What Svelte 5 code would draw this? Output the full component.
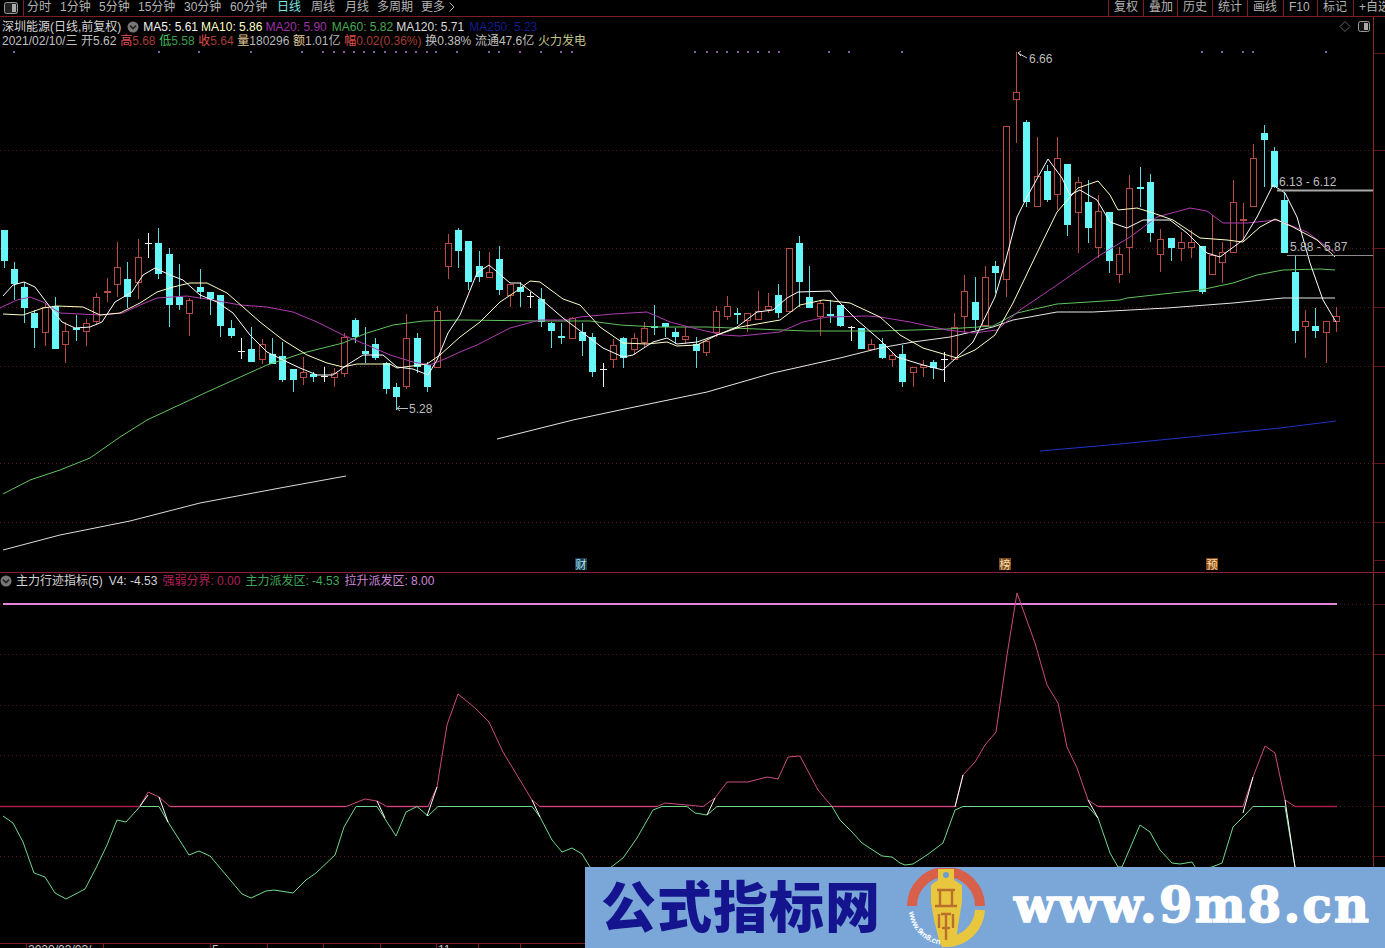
<script>
  // kind, high, body top, body bottom, low: all in page pixels
  const rows = `c 230 230 261 268;c 262 269 284 300;c 282 287 308 323;c 310 313 328 348;r 303 307 332 346;c 297 306 349 349;r 322 331 344 363;c 315 328 330 341;r 319 323 331 346;r 293 297 321 325;r 278 291 292 302;r 242 267 284 297;c 262 279 297 308;r 239 257 282 299;w 233 243 243 258;c 228 243 274 279;c 248 254 305 327;c 264 297 305 310;r 298 300 313 336;c 269 287 292 299;c 292 292 299 315;c 295 295 326 337;c 320 328 336 338;w 338 351 351 359;c 327 349 362 362;r 339 344 359 364;c 338 354 364 364;c 342 356 380 382;c 369 369 380 392;r 357 372 377 385;c 372 374 377 382;w 367 376 376 382;r 368 373 377 387;r 333 337 373 377;c 318 320 337 343;c 327 351 354 363;c 338 344 358 360;c 362 363 389 394;c 383 387 397 410;r 314 338 386 389;c 333 338 367 373;c 362 365 387 392;r 306 311 367 367;r 234 243 266 279;c 228 230 251 268;c 241 241 282 290;c 251 266 277 282;r 252 272 277 277;c 246 259 290 295;r 284 284 295 307;c 282 287 292 307;w 292 296 296 308;c 288 299 322 327;c 322 323 331 348;c 323 336 338 344;r 317 318 338 339;c 323 332 341 356;c 333 337 372 377;w 363 369 369 387;r 339 345 359 368;c 337 338 358 368;r 333 338 349 355;r 322 328 342 347;c 305 326 328 335;c 323 323 327 337;c 328 332 337 344;r 327 336 339 344;c 337 344 351 368;r 341 341 352 356;r 306 311 332 337;r 296 306 316 320;c 308 313 315 324;r 313 313 320 332;r 291 311 319 319;r 293 306 309 313;c 284 295 313 318;r 248 248 311 311;c 236 243 282 307;c 266 297 308 308;r 300 303 316 336;c 300 314 316 323;c 305 305 326 327;w 326 327 327 341;c 328 328 349 349;r 339 344 349 349;c 338 344 358 359;r 352 355 359 367;c 345 354 382 387;r 367 367 372 387;r 360 365 367 377;c 360 362 368 379;w 352 359 359 382;r 313 327 359 359;r 275 291 316 333;c 277 302 320 330;r 266 277 325 327;c 261 266 273 293;r 126 126 279 297;r 52 92 99 143;c 120 122 202 207;r 137 176 206 206;c 165 171 200 202;r 137 158 194 210;c 164 164 225 236;r 177 182 212 253;c 180 202 228 243;r 195 211 247 258;c 212 212 261 273;r 247 254 274 283;r 175 188 247 273;c 167 187 188 207;c 174 182 233 242;r 229 239 254 272;c 238 238 248 261;r 232 242 248 261;r 230 242 247 258;c 246 246 292 294;r 215 255 274 274;r 242 252 262 283;r 180 202 252 252;r 203 219 220 242;r 144 158 206 206;c 125 133 140 187;c 147 151 187 188;c 192 200 253 253;c 256 272 331 343;r 310 321 326 358;c 308 326 331 338;r 321 321 332 363;r 307 316 321 332`;

  const candles = rows.split(';').map((row, i) => {
    const [kind, ...ys] = row.split(' ');
    const [high, top, bot, low] = ys.map(Number);
    return { kind, high, top, bot, low, x: Math.round(3.5 + 10.33 * i) + 0.5 };
  });

  const ma5 = '3,296 13,285 24,282 35,287 50,307 62,322 75,328 90,327 102,322 115,302 132,292 143,275 155,268 170,275 183,280 200,295 217,302 233,313 250,335 267,352 283,360 300,368 317,375 333,375 347,365 363,355 383,355 397,367 413,369 428,375 437,360 448,333 460,315 477,273 489,265 510,283 520,283 542,300 563,318 583,333 603,348 623,357 633,355 653,342 667,338 677,344 697,342 717,335 737,327 757,312 773,310 787,298 798,292 830,291 840,303 857,320 880,340 897,357 923,365 943,370 957,357 973,342 995,297 1005,263 1017,217 1027,197 1048,159 1062,178 1070,195 1080,190 1097,200 1110,222 1127,228 1143,220 1170,220 1187,233 1207,253 1220,257 1243,240 1257,217 1273,185 1285,193 1297,217 1310,263 1323,300 1336,322';
  const ma10 = '3,314 23,315 43,308 57,306 83,307 100,315 120,313 140,303 157,292 173,287 190,283 207,283 227,293 243,307 260,322 283,340 307,355 327,363 343,367 357,364 390,364 397,368 427,364 440,355 460,337 480,322 500,302 518,290 530,281 540,282 563,299 580,305 600,327 623,343 647,344 667,342 677,346 697,345 717,335 740,327 780,320 800,305 823,300 850,303 880,317 900,335 923,348 957,358 975,350 995,335 1013,303 1037,253 1057,212 1078,188 1098,181 1110,195 1118,210 1137,208 1153,213 1173,220 1200,238 1227,240 1243,242 1260,227 1275,219 1293,227 1317,240 1335,257';
  const ma20 = '0,308 17,300 30,297 43,302 60,313 100,315 123,313 140,305 157,298 187,296 213,300 240,305 267,307 293,312 317,322 343,335 367,345 390,355 413,362 430,365 447,358 460,352 477,345 510,328 540,320 567,320 580,317 613,314 647,312 670,322 693,328 723,335 740,336 780,332 803,322 827,317 867,316 880,317 910,322 947,330 973,333 997,330 1020,310 1057,285 1097,257 1130,237 1157,217 1190,208 1207,211 1223,223 1247,223 1277,220 1307,232 1335,253';
  const ma60 = '3,494 30,480 60,470 90,458 120,437 147,420 207,392 267,365 303,353 343,343 367,333 393,325 423,321 460,320 540,321 590,321 620,325 657,327 707,327 757,329 807,331 880,331 947,329 993,326 1017,313 1057,304 1120,300 1127,298 1163,294 1200,290 1233,283 1257,275 1283,270 1320,269 1335,270';
  const ma120a = '3,550 60,535 130,521 200,503 280,488 346,476';
  const ma120b = '497,439 573,420 620,410 707,392 773,373 840,358 880,348 913,342 950,337 993,327 1013,320 1057,312 1093,312 1167,308 1233,303 1283,298 1335,298';
  const ma250 = '1040,451 1120,444 1200,436 1280,428 1336,421';

  // the zero line sits on a pixel row, both curves run along it
  const onZero = (pts) => pts.replace(/,80[67] /g, ',806.5 ').replace(/,80[67]$/, ',806.5');

  const strength = onZero('140,806 148,792 159,797 170,806 346,806 365,799 377,801 387,806 428,806 437,787 447,725 458,694 475,708 489,722 503,752 532,800 540,807 657,807 665,803 687,805 703,807 715,798 727,782 748,782 767,777 778,779 788,757 800,756 818,790 832,807 955,807 963,775 975,762 985,745 996,732 1007,655 1017,593 1035,643 1047,685 1058,703 1067,747 1077,768 1088,800 1098,807 1243,807 1253,777 1265,746 1275,753 1285,800 1295,807');
  const main = onZero('3,816 13,823 23,842 34,873 45,877 55,893 66,899 85,889 96,868 107,845 117,820 126,822 140,807 159,806 168,822 189,855 199,851 210,856 226,875 242,894 251,898 266,891 274,890 293,893 306,880 316,873 335,855 344,827 356,806 377,806 396,836 406,812 417,806 428,816 438,806 532,807 540,817 552,840 562,852 572,848 582,854 590,867 602,880 610,868 623,858 637,838 653,810 662,807 687,807 695,813 707,815 717,807 832,807 840,820 852,832 862,843 882,856 892,857 900,863 905,865 913,864 927,855 943,843 955,810 963,807 1088,807 1098,818 1110,853 1118,867 1122,867 1140,825 1150,832 1160,850 1172,863 1180,864 1192,862 1197,870 1212,867 1222,863 1233,827 1245,815 1253,807 1285,807 1295,867');
  const crossings = ['140,806 148,795', '159,797 168,822', '377,801 385,818', '427,816 437,787', '532,800 540,817', '707,815 715,798', '955,807 963,775', '1088,800 1098,818', '1243,813 1253,777', '1285,800 1295,867'];
  const zeroRuns = [[0, 140], [170, 346], [387, 428], [540, 657], [832, 955], [1098, 1243], [1295, 1337]];

  const dots = [14, 159, 199, 251, 302, 323, 334, 344, 354, 364, 374, 385, 396, 406, 416, 427, 436, 457, 489, 499, 520, 541, 561, 572, 695, 707, 717, 727, 738, 748, 758, 769, 779, 829, 849, 902, 1202, 1222, 1243, 1253, 1326];
  const mainGrid = [150, 248, 307, 366, 463, 522];
  const mainTicks = [53, 150, 248, 307, 366, 463, 522, 560];
  const subGrid = [604, 654, 705, 755, 806, 856];

  const periods = [
    ['分时', 33], ['1分钟', 39], ['5分钟', 39], ['15分钟', 46], ['30分钟', 46], ['60分钟', 47],
    ['日线', 34], ['周线', 34], ['月线', 32], ['多周期', 44],
  ];
  const tools = [['复权', 35], ['叠加', 34], ['历史', 35], ['统计', 35], ['画线', 36], ['F10', 34], ['标记', 36], ['+自选', 32]];
  const dates = [['', 26], ['2020/03/03/四', 77], ['', 107], ['5', 57], ['', 56], ['', 57], ['', 56], ['11', 42], ['', 42], ['', 42]];
</script>

{#snippet fold()}
  <svg class="fold" viewBox="0 0 12 12" width="12" height="12">
    <circle cx="6" cy="6" r="5.5" fill="#777" />
    <path d="M3 4.6 L6 7.6 L9 4.6" fill="none" stroke="#222" stroke-width="1.6" />
  </svg>
{/snippet}

<div class="screen">
  <header class="topbar">
    <div class="layout-btn">
      <svg viewBox="0 0 14 12" width="14" height="12">
        <rect x="0.5" y="0.5" width="13" height="11" rx="2" fill="#222" stroke="#999" />
        <rect x="8" y="2" width="4" height="8" fill="#aaa" />
      </svg>
    </div>
    <nav class="periods">
      {#each periods as [label, w]}
        <span class="period" class:active={label === '日线'} style:width="{w}px">{label}</span>
      {/each}
      <span class="period">更多</span>
      <svg class="more" viewBox="0 0 6 10" width="6" height="10">
        <path d="M0.5 0.5 L5 5 L0.5 9.5" fill="none" stroke="#b4b4b4" />
      </svg>
    </nav>
    <nav class="tools">
      {#each tools as [label, w]}
        <span class="tool" style:width="{w}px">{label}</span>
      {/each}
    </nav>
  </header>

  <section class="panel main-panel">
    <svg class="plot" viewBox="0 17 1385 555" width="1385" height="555">
      {#each mainGrid as y}
        <line class="grid" x1="0" x2="1373" y1={y + 0.5} y2={y + 0.5} />
      {/each}
      {#each mainTicks as y}
        <line class="tick" x1="1374" x2="1385" y1={y + 0.5} y2={y + 0.5} />
      {/each}
      <line class="rail" x1="1373.5" x2="1373.5" y1="17" y2="572" />

      {#each dots as x}
        <rect x={x - 1} y="51" width="2" height="2" fill="#8a5aa4" />
      {/each}

      {#each candles as c}
        {#if c.kind === 'c'}
          <line class="wick-c" x1={c.x} x2={c.x} y1={c.high} y2={c.low} />
          <rect x={c.x - 3.5} y={c.top} width="7" height={Math.max(c.bot - c.top, 2)} fill="#66f6f8" />
        {:else if c.kind === 'r'}
          <line class="wick-r" x1={c.x} x2={c.x} y1={c.high} y2={c.top} />
          <line class="wick-r" x1={c.x} x2={c.x} y1={c.bot} y2={c.low} />
          <rect x={c.x - 3} y={c.top + 0.5} width="6" height={Math.max(c.bot - c.top, 1)} fill="#000" stroke="#b84a44" />
        {:else}
          <line class="wick-w" x1={c.x} x2={c.x} y1={c.high} y2={c.low} />
          <line class="wick-w" x1={c.x - 3.5} x2={c.x + 3.5} y1={c.top + 0.5} y2={c.top + 0.5} />
        {/if}
      {/each}

      <polyline class="ma" points={ma120a} stroke="#dcdcdc" />
      <polyline class="ma" points={ma120b} stroke="#e6e6e6" />
      <polyline class="ma" points={ma250} stroke="#1e34c8" />
      <polyline class="ma" points={ma60} stroke="#62c25e" />
      <polyline class="ma" points={ma20} stroke="#b03cb0" />
      <polyline class="ma" points={ma10} stroke="#ffffc4" />
      <polyline class="ma" points={ma5} stroke="#ffffff" />

      <line x1="1277" x2="1373" y1="190.5" y2="190.5" stroke="#a8a8a8" stroke-width="2" />
      <line x1="1287" x2="1373" y1="255.5" y2="255.5" stroke="#8c8c8c" />
      <text class="note" x="1279" y="186">6.13 - 6.12</text>
      <text class="note" x="1290" y="251">5.88 - 5.87</text>

      <path d="M1018 53 L1027 58 M1018 53 L1021 51 M1018 53 L1021 56" fill="none" stroke="#ccc" />
      <text class="note" x="1029" y="63">6.66</text>
      <path d="M397 408.5 L408 408.5 M397 408.5 L400 406 M397 408.5 L400 411" fill="none" stroke="#bbb" />
      <text class="note" x="409" y="413">5.28</text>

      <rect x="575" y="558" width="12" height="12" fill="#1c3c50" />
      <text class="badge" x="575.5" y="569" fill="#a8e4f4">财</text>
      <rect x="999" y="558" width="12" height="12" fill="#7a4a20" />
      <text class="badge" x="999.5" y="569" fill="#ffe0a8">榜</text>
      <rect x="1206" y="558" width="12" height="12" fill="#8a4a18" />
      <text class="badge" x="1206.5" y="569" fill="#ffe0a8">预</text>

      <path d="M1345 21.5 L1350 26.5 L1345 31.5 L1340 26.5 Z" fill="none" stroke="#666" />
      <rect x="1358.5" y="21.5" width="11" height="10" rx="2" fill="#111" stroke="#999" />
      <rect x="1364" y="23" width="4" height="7" fill="#aaa" />
    </svg>

    <div class="legend">
      <div class="legend-row">
        <span class="name">深圳能源(日线,前复权)</span>
        {@render fold()}
        <span class="ma5">MA5: 5.61</span>
        <span class="ma10">MA10: 5.86</span>
        <span class="ma20">MA20: 5.90</span>
        <span class="ma60">MA60: 5.82</span>
        <span class="ma120">MA120: 5.71</span>
        <span class="ma250">MA250: 5.23</span>
      </div>
      <div class="legend-row quote">
        <span>2021/02/10/三</span>
        <span>开5.62</span>
        <span class="up"><b>高</b>5.68</span>
        <span class="down"><b>低</b>5.58</span>
        <span class="up"><b>收</b>5.64</span>
        <span class="vol"><b>量</b><i>180296</i></span>
        <span class="vol"><b>额</b><i>1.01亿</i></span>
        <span class="up"><b>幅</b>0.02(0.36%)</span>
        <span>换0.38%</span>
        <span>流通47.6亿</span>
        <span class="sector">火力发电</span>
      </div>
    </div>
  </section>

  <section class="panel sub-panel">
    <svg class="plot" viewBox="0 573 1385 370" width="1385" height="370">
      {#each subGrid as y}
        <line class="grid" x1="0" x2="1373" y1={y + 0.5} y2={y + 0.5} />
        <line class="tick" x1="1374" x2="1385" y1={y + 0.5} y2={y + 0.5} />
      {/each}
      <line class="rail" x1="1373.5" x2="1373.5" y1="573" y2="943" />

      <line x1="3" x2="1337" y1="604" y2="604" stroke="#e480da" stroke-width="2" />
      {#each zeroRuns as [a, b]}
        <line x1={a} x2={b} y1="806.5" y2="806.5" stroke="#ac1e50" stroke-width="1.6" />
      {/each}
      <polyline class="ma" points={strength} stroke="#cc4a80" />
      <polyline class="ma" points={main} stroke="#70d88a" />
      {#each crossings as seg}
        <polyline class="ma" points={seg} stroke="#fff" />
      {/each}
    </svg>

    <div class="legend sub-legend">
      <div class="legend-row">
        {@render fold()}
        <span class="name">主力行迹指标(5)</span>
        <span class="name">V4: -4.53</span>
        <span class="weak">强弱分界: 0.00</span>
        <span class="force">主力派发区: -4.53</span>
        <span class="rise">拉升派发区: 8.00</span>
      </div>
    </div>
  </section>

  <footer class="axis">
    {#each dates as [label, w]}
      <span class="date" style:width="{w}px">{label}</span>
    {/each}
  </footer>

  <aside class="watermark">
    <span class="wm-title">公式指标网</span>
    <svg class="wm-logo" viewBox="0 0 80 80" width="80" height="80">
      <path d="M6 38 A34 34 0 0 1 74 38" fill="none" stroke="#d8604a" stroke-width="10" />
      <path d="M74 42 A34 34 0 0 1 40 74" fill="none" stroke="#e8c63e" stroke-width="10" />
      <path d="M32 1 H48 V12 L56 17 V34 L53 52 L50 72 L44 79 H36 L33 72 L28 52 L25 34 V17 L32 12 Z" fill="#e8c63e" />
      <circle cx="40" cy="7" r="3" fill="#6a9ed0" />
      <path d="M31 22 H49 M34 22 V38 M46 22 V38 M29 38 H51 M35 46 H45 M33 46 V60 M47 46 V60 M36 60 H44 M40 46 V72" fill="none" stroke="#b8702c" stroke-width="2.4" />
      <path id="wm-arc" d="M3 44 A37 37 0 0 0 38 77" fill="none" />
      <text class="wm-small"><textPath href="#wm-arc">www.9m8.cn</textPath></text>
    </svg>
    <span class="wm-url">www.9m8.cn</span>
  </aside>
</div>

<style>
  :global(body) {
    background: #000;
  }

  .screen {
    position: relative;
    display: flex;
    flex-direction: column;
    width: 1385px;
    height: 948px;
    overflow: hidden;
    background: #000;
    font-family: "Liberation Sans", "Noto Sans CJK SC", sans-serif;
    font-size: 12px;
    color: #c8c8c8;
  }

  .topbar {
    display: flex;
    flex: none;
    height: 16px;
    border-bottom: 1px solid #7c1c24;
    line-height: 14px;
  }

  .layout-btn {
    display: flex;
    align-items: center;
    width: 24px;
    padding-left: 4px;
    box-sizing: border-box;
    border-right: 1px solid #7c1c24;
  }

  .periods {
    display: flex;
    align-items: flex-start;
    padding-left: 3px;
  }

  .period {
    flex: none;
    white-space: nowrap;
    color: #b4b4b4;
  }

  .period.active {
    color: #7fe4e4;
  }

  .more {
    flex: none;
    margin: 2px 0 0 4px;
  }

  .tools {
    display: flex;
    margin-left: auto;
  }

  .tool {
    flex: none;
    box-sizing: border-box;
    padding-left: 5px;
    border-left: 1px solid #7c1c24;
    white-space: nowrap;
    overflow: hidden;
    color: #b4b4b4;
  }

  .panel {
    position: relative;
    flex: none;
  }

  .main-panel {
    height: 555px;
    border-bottom: 1px solid #8a2034;
  }

  .sub-panel {
    height: 370px;
  }

  .plot {
    display: block;
  }

  .grid {
    stroke: #5a1a1a;
    stroke-dasharray: 1 3;
  }

  .tick {
    stroke: #5a1a1a;
  }

  .rail {
    stroke: #8a2a22;
  }

  .wick-c {
    stroke: #58dcdf;
  }

  .wick-r {
    stroke: #b84a44;
  }

  .wick-w {
    stroke: #f0f0f0;
  }

  .ma {
    fill: none;
    stroke-width: 1;
    stroke-linejoin: round;
  }

  .note {
    fill: #bcbcbc;
    font-size: 12px;
  }

  .badge {
    font-size: 11px;
  }

  .legend {
    position: absolute;
    top: 3px;
    left: 2px;
    line-height: 14px;
  }

  .legend-row {
    display: flex;
    align-items: center;
    white-space: nowrap;
  }

  .legend-row b,
  .legend-row i {
    font-weight: normal;
    font-style: normal;
  }

  .fold {
    flex: none;
    margin: 0 4px 0 6px;
  }

  .name {
    color: #d4d4d4;
  }

  .ma5 {
    color: #f4f4f4;
  }

  .ma10 {
    margin-left: 3px;
    color: #ffffc8;
  }

  .ma20 {
    margin-left: 3px;
    color: #a030a8;
  }

  .ma60 {
    margin-left: 5px;
    color: #4aa850;
  }

  .ma120 {
    margin-left: 3px;
    color: #dcdcdc;
  }

  .ma250 {
    margin-left: 5px;
    color: #141c90;
  }

  .quote {
    gap: 3.7px;
    color: #c0c0c0;
  }

  .up {
    color: #a83c38;
  }

  .up b {
    color: #e05050;
  }

  .down {
    color: #3f9f4a;
  }

  .down b {
    color: #46c060;
  }

  .vol {
    color: #e0c898;
  }

  .vol i {
    color: #b8b8b8;
  }

  .sector {
    color: #c0c488;
  }

  .sub-legend {
    top: 1px;
    left: 0;
  }

  .sub-legend .fold {
    margin: 0 4px 0 0;
  }

  .sub-legend .name + .name {
    margin-left: 6px;
  }

  .weak {
    margin-left: 5px;
    color: #b02058;
  }

  .force {
    margin-left: 5px;
    color: #3fa858;
  }

  .rise {
    margin-left: 5px;
    color: #cf88d8;
  }

  .axis {
    display: flex;
    flex: none;
    height: 5px;
    border-top: 1px solid #7c1c24;
    box-sizing: border-box;
    overflow: hidden;
    line-height: 12px;
    color: #c8c8c8;
  }

  .date {
    flex: none;
    box-sizing: border-box;
    padding-left: 1px;
    border-left: 1px solid #7c1c24;
  }

  .date:first-child {
    border-left: 0;
  }

  .watermark {
    position: absolute;
    top: 867px;
    left: 585px;
    right: 0;
    bottom: 0;
    display: flex;
    align-items: center;
    background: #7ba7d8;
  }

  .wm-title {
    flex: none;
    width: 280px;
    margin-left: 16px;
    margin-top: -8px;
    font-family: "Noto Sans CJK SC", sans-serif;
    font-size: 55px;
    font-weight: 900;
    line-height: 1;
    letter-spacing: 1px;
    color: #14148e;
  }

  .wm-logo {
    flex: none;
    margin-left: 25px;
  }

  .wm-small {
    font-size: 8px;
    font-weight: bold;
    fill: #fff;
  }

  .wm-url {
    flex: none;
    margin-left: 28px;
    margin-top: -6px;
    font-family: "DejaVu Serif", serif;
    font-size: 48px;
    font-weight: bold;
    line-height: 1;
    letter-spacing: 2.3px;
    color: #fff;
    -webkit-text-stroke: 1.5px #fff;
  }
</style>
